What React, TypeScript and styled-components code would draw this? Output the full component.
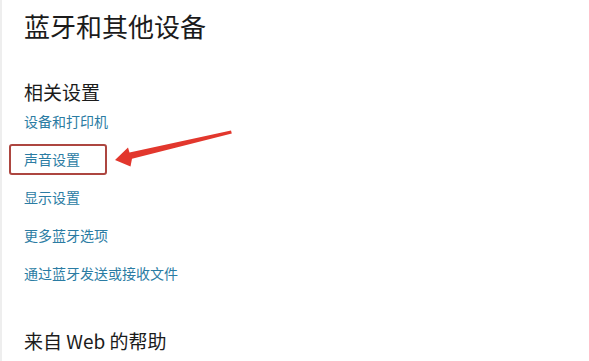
import React from "react";
import styled, { createGlobalStyle } from "styled-components";

const Global = createGlobalStyle`
  html, body { margin: 0; padding: 0; background: #ffffff; }
  body { font-family: "Noto Sans CJK SC", "Noto Sans", sans-serif; }
`;

const Page = styled.div`
  position: relative;
  width: 589px;
  height: 361px;
  box-sizing: border-box;
  padding: 9px 0 0 22px;
  border-left: 2px solid #eeeeee;
  overflow: hidden;
`;

const Title = styled.h1`
  margin: 0;
  font-size: 26px;
  line-height: 34px;
  font-weight: 400;
  color: #1b1b1b;
`;

const SectionTitle = styled.h2<{ $gap: number }>`
  margin: ${(p) => p.$gap}px 0 0 0;
  font-size: 19px;
  line-height: 26px;
  font-weight: 400;
  color: #1b1b1b;
`;

const LinkList = styled.div`
  display: flex;
  flex-direction: column;
  gap: 18px;
  margin-top: 6px;
`;

const LinkRow = styled.div`
  position: relative;
  height: 20px;
  display: flex;
  align-items: center;
`;

const Link = styled.a`
  font-size: 14px;
  line-height: 20px;
  color: #2b7ca3;
  text-decoration: none;
  cursor: pointer;
`;

const Highlight = styled.div`
  position: absolute;
  left: -15px;
  top: -5px;
  width: 94px;
  height: 27px;
  border: 2.5px solid #ad4640;
  border-radius: 3px;
  pointer-events: none;
`;

const ArrowSvg = styled.svg`
  position: absolute;
  left: 0;
  top: 0;
  pointer-events: none;
`;

const links = ["设备和打印机", "声音设置", "显示设置", "更多蓝牙选项", "通过蓝牙发送或接收文件"];

export default function App() {
  return (
    <>
      <Global />
      <Page>
        <Title>蓝牙和其他设备</Title>
        <SectionTitle $gap={36}>相关设置</SectionTitle>
        <LinkList>
          {links.map((l) => (
            <LinkRow key={l}>
              <Link>{l}</Link>
              {l === "声音设置" && <Highlight />}
            </LinkRow>
          ))}
        </LinkList>
        <SectionTitle $gap={45}>来自 Web 的帮助</SectionTitle>
        <ArrowSvg width="589" height="361" viewBox="0 0 589 361">
          <polygon
            points="113,160 126,147.5 127.5,152.5 229,130.5 229.8,133.5 130,158.8 128.5,166.5"
            fill="#e2372d"
          />
        </ArrowSvg>
      </Page>
    </>
  );
}
